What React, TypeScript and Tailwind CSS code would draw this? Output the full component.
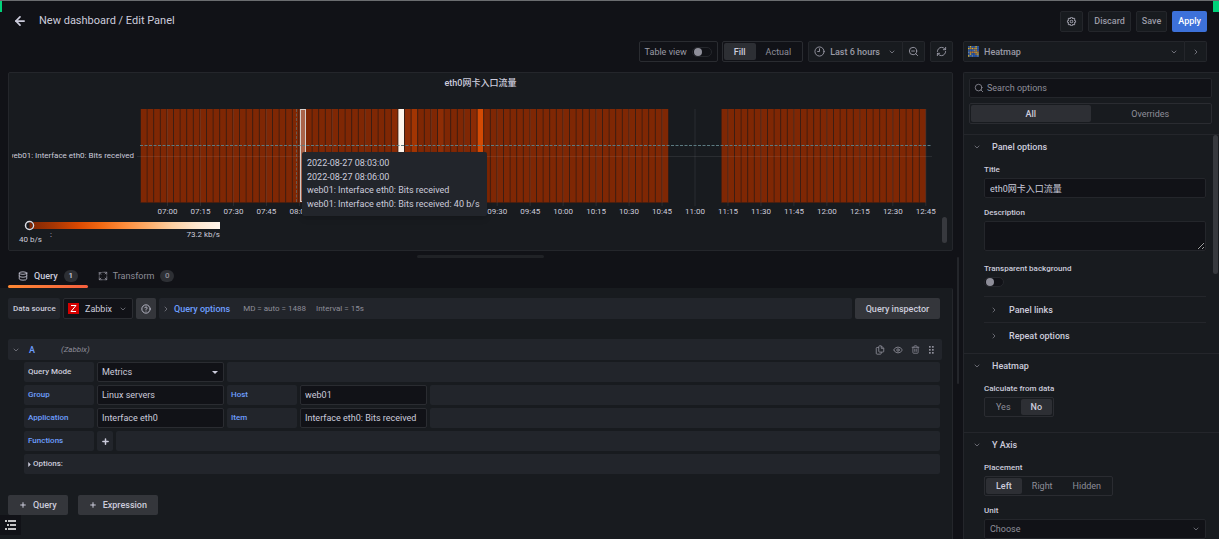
import { useState } from "react";
import type { ReactNode } from "react";
import {
  ArrowLeft,
  ChevronDown,
  ChevronRight,
  CircleHelp,
  Clock9,
  Database,
  Eye,
  Plus,
  RefreshCw,
  Search,
  Trash2,
  ZoomOut,
} from "lucide-react";

const BUCKET = 6.6;
const CHART_X = 132;
const FIRST_TICK = 158.5;
const TICK_STEP = 32.97;

// bucket index -> colour, everything else has the lowest colour of the scale
const HOT: Record<number, string> = {
  38: "#8a2b05",
  39: "#fff5eb",
  40: "#902d04",
  41: "#a23503",
  45: "#8e2d05",
  50: "#8a2b05",
  51: "#d34a04",
};

const buckets = Array.from({ length: 119 }, (_, i) => i).filter((i) => i < 80 || i >= 88);

const ticks = Array.from({ length: 24 }, (_, i) => {
  const minutes = 7 * 60 + i * 15;
  const hh = String(Math.floor(minutes / 60)).padStart(2, "0");
  const mm = String(minutes % 60).padStart(2, "0");
  return { label: `${hh}:${mm}`, x: FIRST_TICK + i * TICK_STEP };
});

function CogIcon() {
  return (
    <svg viewBox="0 0 24 24" className="size-[11px]" fill="currentColor">
      <path d="M21.32,9.55l-1.89-.63.89-1.78A1,1,0,0,0,20.13,6L18,3.87a1,1,0,0,0-1.15-.19l-1.78.89-.63-1.89A1,1,0,0,0,13.5,2h-3a1,1,0,0,0-.95.68L8.92,4.57,7.14,3.68A1,1,0,0,0,6,3.87L3.87,6a1,1,0,0,0-.19,1.15l.89,1.78-1.89.63A1,1,0,0,0,2,10.5v3a1,1,0,0,0,.68.95l1.89.63-.89,1.78A1,1,0,0,0,3.87,18L6,20.13a1,1,0,0,0,1.15.19l1.78-.89.63,1.89a1,1,0,0,0,.95.68h3a1,1,0,0,0,.95-.68l.63-1.89,1.78.89A1,1,0,0,0,18,20.13L20.13,18a1,1,0,0,0,.19-1.15l-.89-1.78,1.89-.63A1,1,0,0,0,22,13.5v-3A1,1,0,0,0,21.32,9.55ZM20,12.78l-1.2.4A2,2,0,0,0,17.64,16l.57,1.14-1.1,1.1L16,17.64a2,2,0,0,0-2.79,1.16l-.4,1.2H11.22l-.4-1.2A2,2,0,0,0,8,17.64l-1.14.57-1.1-1.1L6.36,16A2,2,0,0,0,5.2,13.18L4,12.78V11.22l1.2-.4A2,2,0,0,0,6.36,8L5.79,6.89l1.1-1.1L8,6.36A2,2,0,0,0,10.82,5.2l.4-1.2h1.56l.4,1.2A2,2,0,0,0,16,6.36l1.14-.57,1.1,1.1L17.64,8a2,2,0,0,0,1.16,2.79l1.2.4ZM12,8a4,4,0,1,0,4,4A4,4,0,0,0,12,8Zm0,6a2,2,0,1,1,2-2A2,2,0,0,1,12,14Z" />
    </svg>
  );
}

function TransformIcon() {
  return (
    <svg viewBox="0 0 24 24" className="size-[10px]" fill="none" stroke="currentColor" strokeWidth="2" strokeLinecap="round">
      <path d="M3 9V4h5M3 4l4 4M15 3h6v5M21 3l-4 4M21 15v6h-5M21 21l-4-4M9 21H3v-5M3 21l4-4M11.500 3h1M11.500 21h1M3 12v.5M21 12v.5" />
    </svg>
  );
}

function CopyIcon() {
  return (
    <svg viewBox="0 0 24 24" className="size-[10px]" fill="none" stroke="currentColor" strokeWidth="2" strokeLinejoin="round">
      <path d="M15 2h-4a2 2 0 0 0-2 2v11a2 2 0 0 0 2 2h8a2 2 0 0 0 2-2V8zM15 2v6h6" />
      <path d="M9 6H5a2 2 0 0 0-2 2v12a2 2 0 0 0 2 2h8a2 2 0 0 0 2-2v-3" />
    </svg>
  );
}

function GripIcon() {
  return (
    <svg viewBox="0 0 7 10" className="h-[10px] w-[7px]" fill="currentColor">
      {[1, 4, 7].map((y) => (
        <g key={y}>
          <rect x="1" y={y} width="1.700" height="1.700" />
          <rect x="4" y={y} width="1.700" height="1.700" />
        </g>
      ))}
    </svg>
  );
}

const HEATMAP_ROWS = ["bybbyb", "yoyoyb", "bbbgob", "goooyo", "bybboy", "ybgbbg"];

function HeatmapIcon() {
  const colors: Record<string, string> = { b: "#2c5aa8", y: "#d9b02a", o: "#c97a1c", g: "#6a86a0" };
  return (
    <svg viewBox="0 0 12 12" className="size-[11px]">
      <rect width="12" height="12" fill="#1f3f7d" />
      {HEATMAP_ROWS.map((row, y) =>
        row.split("").map((c, x) => (
          <rect key={`${x}-${y}`} x={x * 2} y={y * 2} width="1.600" height="1.600" fill={colors[c]} />
        )),
      )}
    </svg>
  );
}

function Switch({ id }: { id: string }) {
  return (
    <span className="flex h-[10px] w-5 items-center rounded-full border border-[#25272c] bg-[#111217] px-px">
      <input
        id={id}
        type="checkbox"
        className="size-2 appearance-none rounded-full bg-[#8e8e99] checked:ml-auto checked:bg-[#6e9fff]"
      />
    </span>
  );
}

interface RadioGroupProps {
  name: string;
  options: string[];
  initial: string;
  className?: string;
  itemClassName?: string;
}

function RadioGroup({ name, options, initial, className = "h-5", itemClassName = "px-[10px]" }: RadioGroupProps) {
  const [value, setValue] = useState(initial);

  return (
    <div role="radiogroup" aria-label={name} className={`flex w-fit rounded-xs border border-[#2a2c31] p-px ${className}`}>
      {options.map((option) => (
        <label
          key={option}
          className={`relative flex items-center justify-center rounded-xs text-[#8e8e99] has-checked:bg-[#2d2f34] has-checked:font-medium has-checked:text-[#ccccdc] ${itemClassName}`}
        >
          <input
            type="radio"
            name={name}
            checked={value === option}
            onChange={() => setValue(option)}
            className="sr-only"
          />
          {option}
        </label>
      ))}
    </div>
  );
}

function Section({ title, children, className = "" }: { title: string; children: ReactNode; className?: string }) {
  return (
    <section className={`border-t border-[#24262b] ${className}`}>
      <button className="flex h-6 w-full items-center pl-[9px] font-medium">
        <ChevronDown className="size-2 text-[#8e8e99]" />
        <span className="ml-[11px]">{title}</span>
      </button>
      <div className="pt-[2px] pr-[13px] pl-5">{children}</div>
    </section>
  );
}

function FieldLabel({ htmlFor, children }: { htmlFor?: string; children: ReactNode }) {
  return (
    <label htmlFor={htmlFor} className="flex h-[17px] items-center text-[8px] font-medium">
      {children}
    </label>
  );
}

function SubSection({ title }: { title: string }) {
  return (
    <button className="flex h-[26px] w-full items-center border-t border-[#24262b] pl-[6px] font-medium">
      <ChevronRight className="size-2 text-[#8e8e99]" />
      <span className="ml-[11px]">{title}</span>
    </button>
  );
}

function Heatmap() {
  return (
    <svg className="block h-[157px] w-full text-[8px]" role="img" aria-label="Heatmap">
      <defs>
        <linearGradient id="oranges">
          <stop offset="0" stopColor="#7f2704" />
          <stop offset="0.125" stopColor="#a63603" />
          <stop offset="0.25" stopColor="#d94801" />
          <stop offset="0.375" stopColor="#f16913" />
          <stop offset="0.5" stopColor="#fd8d3c" />
          <stop offset="0.625" stopColor="#fdae6b" />
          <stop offset="0.75" stopColor="#fdd0a2" />
          <stop offset="0.875" stopColor="#fee6ce" />
          <stop offset="1" stopColor="#fff5eb" />
        </linearGradient>
        <clipPath id="axis">
          <rect x="3" y="50" width="130" height="24" />
        </clipPath>
      </defs>

      {buckets.map((i) => (
        <g key={i}>
          <rect x={CHART_X + i * BUCKET - 0.5} y="16" width={BUCKET} height="94" fill="#4a1f0f" />
          <rect x={CHART_X + i * BUCKET} y="16" width={BUCKET - 1} height="93" fill={HOT[i] ?? "#7f2704"} />
        </g>
      ))}

      <g stroke="#ccccdc" strokeOpacity="0.100">
        <path d="M128 63.500H923" />
        {ticks.map((t) => (
          <path key={t.label} d={`M${t.x} 16V113`} />
        ))}
      </g>

      <rect x="291.500" y="16.500" width="5" height="92" fill="#a9644a" stroke="#d8cfcb" />
      <g stroke="#5c7b82" strokeDasharray="3 1.500" fill="none">
        <path d="M131 52.500H923" />
        <path d="M287.500 16V109" strokeOpacity="0.600" />
      </g>

      <g fill="#ccccdc">
        <text x="125" y="65" textAnchor="end" clipPath="url(#axis)">
          web01: Interface eth0: Bits received
        </text>
        {ticks.map((t) => (
          <text key={t.label} x={t.x} y="121" textAnchor="middle">
            {t.label}
          </text>
        ))}
        <text x="10" y="149">40 b/s</text>
        <text x="41" y="144">:</text>
        <text x="211" y="144" textAnchor="end">73.2 kb/s</text>
      </g>

      <rect x="21" y="129" width="190" height="7" fill="url(#oranges)" />
      <circle cx="20.500" cy="132.500" r="4" fill="#181b1f" stroke="#dcdce4" strokeWidth="1.500" />
      <path d="M20.500 129.500a3 3 0 0 1 0 6z" fill="#7f2704" />
    </svg>
  );
}

function GraphPanel() {
  return (
    <section className="relative mt-[10px] rounded-xs border border-[#24262b] bg-[#181b1f]">
      <h2 className="flex h-5 items-center justify-center font-medium">eth0网卡入口流量</h2>
      <Heatmap />
      <div className="absolute top-[79px] left-[293px] w-[185px] rounded-xs bg-[#22252b] px-[5px] py-[5px] whitespace-nowrap shadow-md">
        <p className="h-[13px] leading-[13px]">2022-08-27 08:03:00</p>
        <p className="h-[14px] leading-[14px]">2022-08-27 08:06:00</p>
        <p className="h-[13px] leading-[13px]">web01: Interface eth0: Bits received</p>
        <p className="h-[14px] leading-[14px]">web01: Interface eth0: Bits received: 40 b/s</p>
      </div>
      <div className="absolute right-[5px] bottom-[7px] h-[26px] w-[5px] rounded-full bg-[#37393e]" />
    </section>
  );
}

function Toolbar() {
  return (
    <div className="flex h-[21px] justify-end text-[#9a9aa6]">
      <div className="flex items-center gap-[5px] rounded-xs border border-[#2a2c31] px-[5px]">
        <label htmlFor="table-view">Table view</label>
        <Switch id="table-view" />
      </div>
      <RadioGroup name="Size" options={["Fill", "Actual"]} initial="Fill" className="ml-1" />
      <button className="ml-[5px] flex items-center rounded-l-xs border border-[#24262b] bg-[#181b1f] px-[5px] font-medium">
        <Clock9 className="size-[11px]" />
        <span className="ml-[5px]">Last 6 hours</span>
        <ChevronDown className="mr-px ml-2 size-2" />
      </button>
      <button
        aria-label="Zoom out"
        className="flex w-[22px] items-center justify-center rounded-r-xs border border-l-0 border-[#24262b] bg-[#181b1f]"
      >
        <ZoomOut className="size-[11px]" />
      </button>
      <button
        aria-label="Refresh"
        className="ml-[5px] flex w-[23px] items-center justify-center rounded-xs border border-[#24262b] bg-[#181b1f]"
      >
        <RefreshCw className="size-[11px]" />
      </button>
    </div>
  );
}

function QueryTabs() {
  return (
    <div role="tablist" className="flex h-[26px]">
      <button role="tab" aria-selected="true" className="flex flex-col">
        <span className="flex h-[23px] items-center px-[10px] pt-1 font-medium">
          <Database className="size-[10px]" />
          <span className="ml-[6px]">Query</span>
          <span className="ml-[6px] flex h-3 w-[14px] items-center justify-center rounded-full bg-[#2d2f34] text-[8px]">
            1
          </span>
        </span>
        <span className="h-[3px] w-full rounded-xs bg-linear-to-r from-[#ff8833] to-[#f55f3e]" />
      </button>
      <button role="tab" aria-selected="false" className="flex h-[23px] items-center px-[10px] pt-1 text-[#8e8e99]">
        <TransformIcon />
        <span className="ml-[5px]">Transform</span>
        <span className="ml-[6px] flex h-3 w-[14px] items-center justify-center rounded-full bg-[#2d2f34] text-[8px] font-medium">
          0
        </span>
      </button>
    </div>
  );
}

function QueryLabel({ htmlFor, blue = true, children }: { htmlFor?: string; blue?: boolean; children: ReactNode }) {
  return (
    <label
      htmlFor={htmlFor}
      className={`flex w-[70px] shrink-0 items-center rounded-xs bg-[#22252b] pl-1 text-[8px] font-medium ${blue ? "text-[#6e9fff]" : ""}`}
    >
      {children}
    </label>
  );
}

function QueryInput({ id, value }: { id: string; value: string }) {
  return (
    <input
      id={id}
      defaultValue={value}
      className="w-[127px] shrink-0 rounded-xs border border-[#2a2c31] bg-[#111217] px-1"
    />
  );
}

function Filler() {
  return <div className="flex-1 rounded-xs bg-[#22252b]" />;
}

function QueryEditor() {
  return (
    <div className="mt-5">
      <div className="flex h-[21px] items-center rounded-xs bg-[#22252b] px-1">
        <button aria-label="Collapse query">
          <ChevronDown className="size-2 text-[#8e8e99]" />
        </button>
        <span className="ml-[9px] font-medium text-[#6e9fff]">A</span>
        <span className="ml-[26px] text-[8px] text-[#8e8e99] italic">(Zabbix)</span>
        <div className="ml-auto flex items-center gap-2 pr-[3px] text-[#8e8e99]">
          <button aria-label="Duplicate query">
            <CopyIcon />
          </button>
          <button aria-label="Disable query">
            <Eye className="size-[10px]" />
          </button>
          <button aria-label="Remove query">
            <Trash2 className="size-[9px]" />
          </button>
          <button aria-label="Move query">
            <GripIcon />
          </button>
        </div>
      </div>

      <div className="mt-[2px] mr-[2px] ml-4 flex flex-col gap-[3px]">
        <div className="flex h-5 gap-[3px]">
          <QueryLabel htmlFor="query-mode" blue={false}>
            Query Mode
          </QueryLabel>
          <div className="flex w-[127px] items-center rounded-xs border border-[#2a2c31] bg-[#111217] pr-[5px] pl-1">
            <select id="query-mode" className="w-full appearance-none">
              <option>Metrics</option>
            </select>
            <svg viewBox="0 0 6 3" className="h-[3px] w-[6px] shrink-0">
              <path d="M0 0h6L3 3z" fill="currentColor" />
            </svg>
          </div>
          <Filler />
        </div>
        <div className="flex h-5 gap-[3px]">
          <QueryLabel htmlFor="group">Group</QueryLabel>
          <QueryInput id="group" value="Linux servers" />
          <QueryLabel htmlFor="host">Host</QueryLabel>
          <QueryInput id="host" value="web01" />
          <Filler />
        </div>
        <div className="flex h-5 gap-[3px]">
          <QueryLabel htmlFor="application">Application</QueryLabel>
          <QueryInput id="application" value="Interface eth0" />
          <QueryLabel htmlFor="item">Item</QueryLabel>
          <QueryInput id="item" value="Interface eth0: Bits received" />
          <Filler />
        </div>
        <div className="flex h-5 gap-[3px]">
          <QueryLabel>Functions</QueryLabel>
          <button aria-label="Add function" className="flex w-4 items-center justify-center rounded-xs bg-[#22252b]">
            <Plus className="size-[9px]" strokeWidth={4} />
          </button>
          <Filler />
        </div>
        <button className="flex h-5 items-center rounded-xs bg-[#22252b] pl-1 text-[8px] font-medium">
          <svg viewBox="0 0 3 6" className="mr-[2px] h-[5px] w-[3px]">
            <path d="M0 0v6l3-3z" fill="currentColor" />
          </svg>
          Options:
        </button>
      </div>
    </div>
  );
}

function QueryPane() {
  return (
    <div className="-ml-2 flex-1 rounded-tr-xs border-r border-[#24262b] bg-[#181b1f] pt-[10px] pr-[10px] pl-2">
      <div className="flex h-[21px] gap-[3px] pr-[2px]">
        <label
          htmlFor="datasource"
          className="flex w-[52px] items-center rounded-xs bg-[#22252b] pl-[5px] text-[8px] font-medium"
        >
          Data source
        </label>
        <div className="flex w-[70px] items-center rounded-xs border border-[#2a2c31] bg-[#111217] px-1">
          <svg viewBox="0 0 11 11" className="size-[11px] shrink-0">
            <rect width="11" height="11" fill="#d40000" />
            <path d="M3 2.500h5L3 8.500h5" fill="none" stroke="#fff" />
          </svg>
          <select id="datasource" className="ml-[6px] w-full appearance-none">
            <option>Zabbix</option>
          </select>
          <ChevronDown className="mr-px size-2 shrink-0 text-[#8e8e99]" />
        </div>
        <button aria-label="Help" className="flex w-5 items-center justify-center rounded-xs bg-[#34363b]">
          <CircleHelp className="size-[10px]" />
        </button>
        <button className="flex flex-1 items-center rounded-xs bg-[#22252b] pl-[3px]">
          <ChevronRight className="size-2 text-[#8e8e99]" />
          <span className="ml-1 font-medium text-[#6e9fff]">Query options</span>
          <span className="ml-[13px] text-[8px] text-[#8e8e99]">MD = auto = 1488</span>
          <span className="ml-[10px] text-[8px] text-[#8e8e99]">Interval = 15s</span>
        </button>
        <button className="w-[85px] rounded-xs bg-[#34363b] font-medium">Query inspector</button>
      </div>

      <QueryEditor />

      <div className="mt-[21px] flex gap-[10px]">
        <button className="flex h-5 items-center gap-[6px] rounded-xs bg-[#34363b] px-[11px] font-medium">
          <Plus className="size-2" strokeWidth={3} />
          Query
        </button>
        <button className="flex h-5 items-center gap-[6px] rounded-xs bg-[#34363b] px-[11px] font-medium">
          <Plus className="size-2" strokeWidth={3} />
          Expression
        </button>
      </div>
    </div>
  );
}

function OptionsPane() {
  return (
    <aside className="flex min-h-0 flex-col">
      <div className="mr-3 flex h-[21px] shrink-0 font-medium text-[#9a9aa6]">
        <button className="flex flex-1 items-center rounded-l-xs border border-[#24262b] bg-[#181b1f] px-1">
          <HeatmapIcon />
          <span className="ml-[5px]">Heatmap</span>
          <ChevronDown className="mr-[2px] ml-auto size-2" />
        </button>
        <button
          aria-label="Close options"
          className="flex w-[22px] items-center justify-center rounded-r-xs border border-l-0 border-[#24262b] bg-[#181b1f]"
        >
          <ChevronRight className="size-2" />
        </button>
      </div>

      <div className="relative mt-[10px] min-h-0 flex-1 overflow-hidden rounded-tl-xs border-t border-l border-[#24262b] bg-[#181b1f]">
        <div className="mt-[5px] mr-[7px] ml-[5px] flex h-5 items-center rounded-xs border border-[#24262b] bg-[#111217] px-1">
          <Search className="size-[10px] text-[#8e8e99]" />
          <input
            aria-label="Search options"
            placeholder="Search options"
            className="ml-[3px] flex-1 placeholder:text-[#8e8e99]"
          />
        </div>
        <div className="mt-[5px] mr-[7px] mb-[10px] ml-[5px]">
          <RadioGroup
            name="Options"
            options={["All", "Overrides"]}
            initial="All"
            className="h-[21px] w-full"
            itemClassName="flex-1"
          />
        </div>

        <Section title="Panel options" className="pb-[5px]">
          <FieldLabel htmlFor="title">Title</FieldLabel>
          <input
            id="title"
            defaultValue="eth0网卡入口流量"
            className="block h-5 w-full rounded-xs border border-[#24262b] bg-[#111217] px-[5px]"
          />
          <div className="mt-[6px]">
            <FieldLabel htmlFor="description">Description</FieldLabel>
            <textarea
              id="description"
              className="block h-[30px] w-full resize-y rounded-xs border border-[#24262b] bg-[#111217]"
            />
          </div>
          <div className="mt-[9px] mb-[9px]">
            <FieldLabel htmlFor="transparent">Transparent background</FieldLabel>
            <Switch id="transparent" />
          </div>
          <SubSection title="Panel links" />
          <SubSection title="Repeat options" />
        </Section>

        <Section title="Heatmap" className="pb-[15px]">
          <FieldLabel>Calculate from data</FieldLabel>
          <RadioGroup name="Calculate from data" options={["Yes", "No"]} initial="No" />
        </Section>

        <Section title="Y Axis">
          <FieldLabel>Placement</FieldLabel>
          <RadioGroup name="Placement" options={["Left", "Right", "Hidden"]} initial="Left" />
          <div className="mt-[6px]">
            <FieldLabel htmlFor="unit">Unit</FieldLabel>
            <div className="flex h-5 items-center rounded-xs border border-[#24262b] bg-[#111217] px-[5px] text-[#8e8e99]">
              <select id="unit" className="w-full appearance-none">
                <option>Choose</option>
              </select>
              <ChevronDown className="size-2 shrink-0" />
            </div>
          </div>
        </Section>

        <div className="absolute top-[62px] right-px h-[139px] w-[5px] rounded-full bg-[#37393e]" />
      </div>
    </aside>
  );
}

export default function App() {
  return (
    <div className="relative flex h-screen flex-col overflow-hidden border-t border-[#6b6d70] bg-[#111217] font-['Roboto','Noto_Sans_CJK_SC',sans-serif] text-[9px] leading-3 text-[#ccccdc]">
      <header className="flex h-10 shrink-0 items-center pr-3 pl-[13px]">
        <button aria-label="Go back">
          <ArrowLeft className="size-[14px]" strokeWidth={3} />
        </button>
        <h1 className="ml-3 text-[11px]">New dashboard / Edit Panel</h1>
        <div className="ml-auto flex h-[21px] gap-[5px] font-medium text-[#9a9aa6]">
          <button
            aria-label="Dashboard settings"
            className="flex w-[23px] items-center justify-center rounded-xs border border-[#24262b] bg-[#181b1f]"
          >
            <CogIcon />
          </button>
          <button className="rounded-xs border border-[#24262b] bg-[#181b1f] px-[5px]">Discard</button>
          <button className="rounded-xs border border-[#24262b] bg-[#181b1f] px-[5px]">Save</button>
          <button className="rounded-xs bg-[#3d71d9] px-[6px] text-white">Apply</button>
        </div>
      </header>

      <div className="grid min-h-0 flex-1 grid-cols-[minmax(0,1fr)_256px] gap-[10px]">
        <main className="relative flex min-h-0 flex-col pl-2">
          <Toolbar />
          <GraphPanel />
          <div className="mx-auto mt-1 mb-1 h-[3px] w-[127px] shrink-0 rounded-full bg-[#202226]" />
          <QueryTabs />
          <QueryPane />
          <div className="absolute top-[216px] -right-[6px] h-[127px] w-[2px] rounded-full bg-[#24262b]" />
        </main>
        <OptionsPane />
      </div>

      <button
        aria-label="Contents"
        className="absolute bottom-1 left-0 flex h-5 w-[21px] items-center justify-center bg-[#111217] text-white"
      >
        <svg viewBox="0 0 12 10" className="h-[10px] w-3" stroke="currentColor" strokeWidth="1.300">
          <path d="M0 1h2M3 1h8M2 5h2M5 5h6M0 9h2M3 9h8" />
        </svg>
      </button>
      <div className="absolute -top-px left-0 h-3 w-[2px] bg-[#00d27a]" />
      <div className="absolute -top-px right-0 h-3 w-[6px] bg-[#00d27a]" />
    </div>
  );
}
